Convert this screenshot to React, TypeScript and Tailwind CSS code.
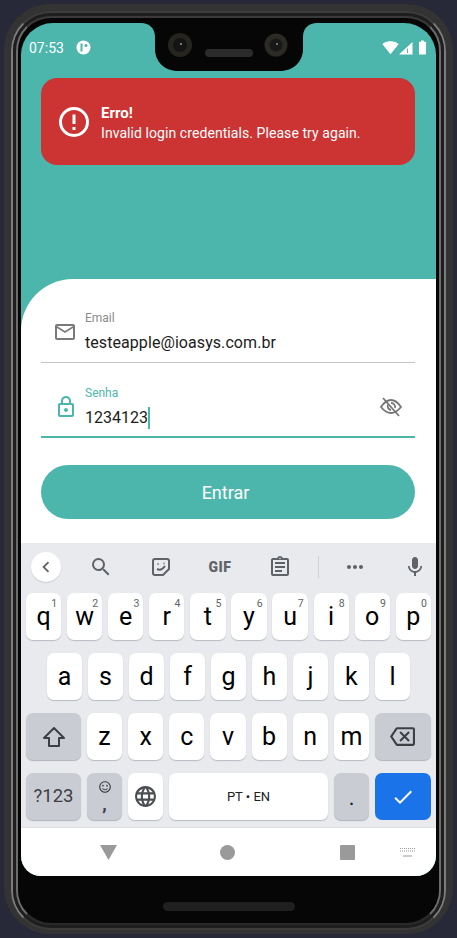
import { MdCheck, MdMic, MdOutlineAssignment, MdOutlineBackspace, MdOutlineEmail, MdOutlineLock, MdLanguage, MdSearch, MdSignalWifi4Bar, MdBatteryFull, MdMoreHoriz, MdChevronLeft, MdOutlineSentimentSatisfied } from 'react-icons/md';

const rowOne = [
  ['q', '1'], ['w', '2'], ['e', '3'], ['r', '4'], ['t', '5'],
  ['y', '6'], ['u', '7'], ['i', '8'], ['o', '9'], ['p', '0'],
];
const rowTwo = ['a', 's', 'd', 'f', 'g', 'h', 'j', 'k', 'l'];
const rowThree = ['z', 'x', 'c', 'v', 'b', 'n', 'm'];

function Key({ label, hint }: { label: string; hint?: string }) {
  return (
    <div className="relative flex h-[47px] w-[35.2px] shrink-0 items-center justify-center rounded-[7px] bg-white text-[25px] leading-none text-black shadow-[0_1px_1px_#b9bcc2]">
      {label}
      {hint && <span className="absolute right-[4px] top-[5px] text-[10.5px] leading-[12px] text-[#5f6368]">{hint}</span>}
    </div>
  );
}

function Notch() {
  return (
    <svg className="absolute left-[120px] top-0" width="176" height="48" viewBox="0 0 176 48">
      <path d="M0 0H176C168 0 162 5 162 14V26C162 39 152 48 139 48H37C24 48 14 39 14 26V14C14 5 8 0 0 0Z" fill="#060606" />
      <circle cx="39" cy="22" r="12" fill="#25241f" />
      <circle cx="39" cy="22" r="7" fill="#141414" />
      <circle cx="40" cy="21" r="1" fill="#9a9a9a" />
      <circle cx="135" cy="22" r="11.5" fill="#2b2a24" />
      <circle cx="135" cy="22" r="6.5" fill="#181818" />
      <circle cx="136" cy="21" r="1" fill="#8a8a8a" />
      <rect x="64" y="26" width="48" height="8" rx="4" fill="#2b2b2b" />
    </svg>
  );
}

function StatusBar() {
  return (
    <div className="flex h-[25px] items-center justify-between pl-[8px] pr-[5px] text-white">
      <div className="flex items-center gap-[12px]">
        <span className="text-[14px] leading-none">07:53</span>
        <svg width="15" height="15" viewBox="0 0 15 15">
          <circle cx="7.5" cy="7.5" r="7" fill="white" />
          <rect x="4.5" y="3.5" width="2" height="8" fill="#4db6ac" />
          <circle cx="10" cy="5.5" r="1.5" fill="#4db6ac" />
        </svg>
      </div>
      <div className="flex items-center">
        <MdSignalWifi4Bar size={17} />
        <svg width="14" height="14" viewBox="0 0 14 14">
          <path d="M0 13.5 13.5 1V13.5Z" fill="white" />
          <path d="M8.5 7.5V12" stroke="#4db6ac" strokeWidth="1" />
        </svg>
        <MdBatteryFull className="ml-[1px]" size={17} />
      </div>
    </div>
  );
}

function AlertBox() {
  return (
    <div className="ml-[20px] mr-[21px] mt-[18px] flex h-[87px] items-center rounded-[16px] bg-[#cc3333] pl-[18px] text-white">
      <svg width="30" height="30" viewBox="0 0 30 30" fill="none">
        <circle cx="15" cy="15" r="13.5" stroke="white" strokeWidth="3" />
        <path d="M15 7.5V17" stroke="white" strokeWidth="3" />
        <path d="M15 20V23" stroke="white" strokeWidth="3" />
      </svg>
      <div className="ml-[12px] mt-[2px]">
        <div className="text-[15px] font-bold leading-[20px]">Erro!</div>
        <div className="text-[14px] leading-[20px] tracking-[0.07px]">Invalid login credentials. Please try again.</div>
      </div>
    </div>
  );
}

function LoginForm() {
  return (
    <div className="flex h-[264px] flex-col rounded-tl-[52px] bg-white pl-[20px] pr-[21px]">
      <div className="mt-[29px] flex h-[55px] items-center border-b border-[#c4c4c4] pl-[12px]">
        <MdOutlineEmail className="mb-[6px] text-[#7a7a7a]" size={24} />
        <div className="ml-[8px] mb-[6px]">
          <div className="text-[12px] leading-[14px] text-[#8a8a8a]">Email</div>
          <div className="mt-[7px] text-[16px] leading-[22px] tracking-[0.07px] text-[#1c1c1c]">testeapple@ioasys.com.br</div>
        </div>
      </div>
      <div className="mt-[18px] flex h-[57px] items-center justify-between border-b-2 border-[#4db6ac] pl-[13px] pr-[12px]">
        <div className="flex items-center">
          <MdOutlineLock className="mb-[4px] text-[#4db6ac]" size={24} />
          <div className="ml-[7px] mb-[3px]">
            <div className="text-[12px] leading-[14px] text-[#4db6ac]">Senha</div>
            <div className="mt-[7px] flex h-[22px] items-center text-[16px] leading-[22px] text-[#1c1c1c]">
              1234123
              <span className="h-[22px] w-[2px] bg-[#4db6ac]" />
            </div>
          </div>
        </div>
        <svg className="mb-[3px]" width="24" height="22" viewBox="0 0 24 22" fill="none" stroke="#757575" strokeWidth="1.8">
          <path d="M2 11C6 5 9 4 12 4S18 5 22 11C18 16 15 17 12 17S6 16 2 11Z" />
          <path d="M9 8.5A4 4 0 0 0 12 14" />
          <path d="M12 7A4 4 0 0 1 16 12" />
          <path d="M4 2 20 20" />
        </svg>
      </div>
      <button className="mt-[27px] h-[54px] w-full rounded-[27px] bg-[#4db6ac] pr-[5px] text-[18px] text-white">Entrar</button>
    </div>
  );
}

function Toolbar() {
  return (
    <div className="relative flex h-[47px] items-center text-[#5f6368]">
      <div className="ml-[10px] flex h-[30px] w-[30px] items-center justify-center rounded-full bg-white shadow-[0_1px_1px_#c9ccd3]">
        <MdChevronLeft size={22} />
      </div>
      <MdSearch className="ml-[28px]" size={24} />
      <svg className="ml-[36px]" width="24" height="24" viewBox="0 0 24 24" fill="none" stroke="#5f6368" strokeWidth="2">
        <path d="M6 4H18A2 2 0 0 1 20 6V14L14 20H6A2 2 0 0 1 4 18V6A2 2 0 0 1 6 4Z" />
        <path d="M8.5 9H9.5M14.5 8.5H15.5M8 14C11 15.5 14 14 16 11" />
      </svg>
      <span className="ml-[34px] w-[26px] text-center text-[14px] font-black leading-none tracking-[0.5px]">GIF</span>
      <MdOutlineAssignment className="ml-[35px]" size={24} />
      <div className="ml-[26px] h-[22px] w-px bg-[#cfd1d6]" />
      <MdMoreHoriz className="ml-[24px]" size={24} />
      <MdMic className="ml-[36px]" size={24} />
    </div>
  );
}

function Keyboard() {
  return (
    <div className="flex h-[285px] flex-col border-b border-[#dfe1e5] bg-[#e8eaed]">
      <Toolbar />
      <div className="mt-[3px] flex h-[227px] flex-col justify-between px-[5px]">
        <div className="flex justify-between">
          {rowOne.map(([l, h]) => <Key key={l} label={l} hint={h} />)}
        </div>
        <div className="flex justify-center gap-[5.8px]">
          {rowTwo.map((l) => <Key key={l} label={l} />)}
        </div>
        <div className="flex justify-between">
          <div className="flex h-[47px] w-[55px] items-center justify-center rounded-[7px] bg-[#c9ccd3] shadow-[0_1px_1px_#b0b3b9]">
            <svg width="24" height="24" viewBox="0 0 24 24" fill="none" stroke="#3c4043" strokeWidth="2" strokeLinejoin="round">
              <path d="M12 3 22 13H17V21H7V13H2Z" />
            </svg>
          </div>
          {rowThree.map((l) => <Key key={l} label={l} />)}
          <div className="flex h-[47px] w-[56px] items-center justify-center rounded-[7px] bg-[#c9ccd3] text-[#3c4043] shadow-[0_1px_1px_#b0b3b9]">
            <MdOutlineBackspace size={25} />
          </div>
        </div>
        <div className="flex gap-[6px]">
          <div className="flex h-[47px] w-[55px] items-center justify-center rounded-[7px] bg-[#c9ccd3] text-[18.5px] text-[#3c4043] shadow-[0_1px_1px_#b0b3b9]">?123</div>
          <div className="flex h-[47px] w-[35px] flex-col items-center justify-center rounded-[7px] bg-[#c9ccd3] text-[#3c4043] shadow-[0_1px_1px_#b0b3b9]">
            <MdOutlineSentimentSatisfied size={14} />
            <span className="text-[18px] font-bold leading-[20px]">,</span>
          </div>
          <div className="flex h-[47px] w-[35px] items-center justify-center rounded-[7px] bg-white text-[#4a4d51] shadow-[0_1px_1px_#b9bcc2]">
            <MdLanguage size={25} />
          </div>
          <div className="flex h-[47px] w-[159px] items-center justify-center rounded-[7px] bg-white text-[13px] text-[#202124] shadow-[0_1px_1px_#b9bcc2]">PT • EN</div>
          <div className="flex h-[47px] w-[35px] items-center justify-center rounded-[7px] bg-[#c9ccd3] pt-[6px] text-[16px] font-bold text-[#202124] shadow-[0_1px_1px_#b0b3b9]">.</div>
          <div className="flex h-[47px] w-[56px] items-center justify-center rounded-[7px] bg-[#1a73e8] text-white">
            <MdCheck size={24} />
          </div>
        </div>
      </div>
    </div>
  );
}

function NavBar() {
  return (
    <div className="relative flex h-[48px] items-center bg-white">
      <svg className="ml-[79px]" width="17" height="15" viewBox="0 0 17 15"><path d="M0 0H17L8.5 15Z" fill="#9a9a9a" /></svg>
      <div className="ml-[103px] h-[15px] w-[15px] rounded-full bg-[#9a9a9a]" />
      <div className="ml-[105px] h-[15px] w-[15px] rounded-[1px] bg-[#9a9a9a]" />
      <svg className="ml-[45px]" width="15" height="9" viewBox="0 0 15 9" fill="#9a9a9a">
        <path d="M0 0h1v1H0zM2 0h1v1H2zM4 0h1v1H4zM6 0h1v1H6zM8 0h1v1H8zM10 0h1v1h-1zM12 0h1v1h-1zM14 0h1v1h-1zM0 2.5h1v1H0zM2 2.5h1v1H2zM4 2.5h1v1H4zM6 2.5h1v1H6zM8 2.5h1v1H8zM10 2.5h1v1h-1zM12 2.5h1v1h-1zM14 2.5h1v1h-1zM3 7.5h9v1H3z" />
      </svg>
    </div>
  );
}

export default function App() {
  return (
    <div className="h-[938px] w-[457px] overflow-hidden bg-[#272938] p-[4px] font-['Roboto',sans-serif]">
      {/* device frame */}
      <div className="h-[930px] rounded-[46px] bg-[#333333] px-[7px] pb-[4px] pt-[7px]">
        <div className="h-full rounded-[40px] border-2 border-x-[#7c7c7c] border-y-[#3c3c3c]">
          <div className="h-full rounded-[38px] border-[3px] border-[#1e1e1e]">
            <div className="h-full rounded-[35px] border-2 border-x-[#6c6c6c] border-b-[#2a2a2a] border-t-[#3a3a3a]">
              <div className="flex h-full flex-col rounded-[33px] bg-[#060606] px-[3px] pt-[5px]">
                <div className="relative h-[853px] overflow-hidden rounded-b-[20px] rounded-t-[32px] bg-[#4db6ac]">
                  <Notch />
                  <div className="h-[256px] pt-[12px]">
                    <StatusBar />
                    <AlertBox />
                  </div>
                  <LoginForm />
                  <Keyboard />
                  <NavBar />
                </div>
                <div className="mx-auto mt-[26px] h-[9px] w-[132px] rounded-full bg-[#1f1f1f]" />
              </div>
            </div>
          </div>
        </div>
      </div>
    </div>
  );
}
